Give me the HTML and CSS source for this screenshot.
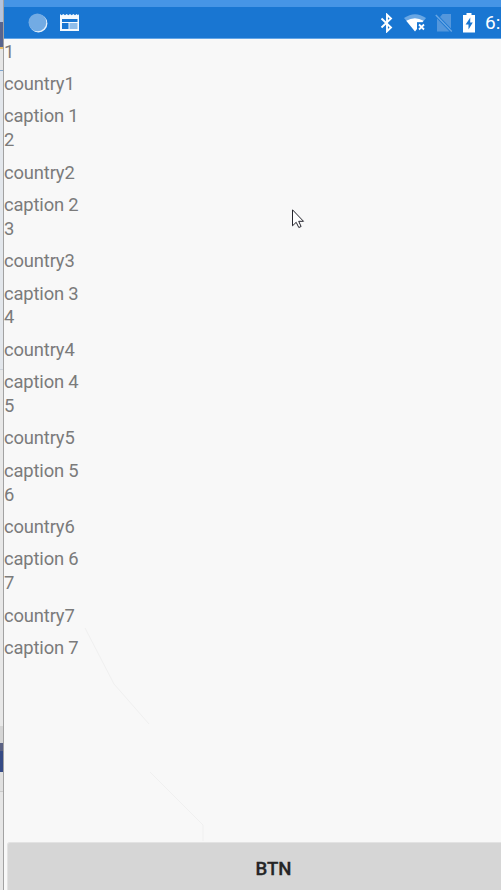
FILE: index.html
```
<!DOCTYPE html>
<html>
<head>
  <meta charset="UTF-8">
  <title>Countries</title>
  <link rel="stylesheet" href="styles.css">
</head>
<body>
  <div class="desktop"></div>
  <div class="phone">
    <div class="titlebar"></div>
    <div class="statusbar">
      <svg class="sync" width="20" height="20" viewBox="0 0 20 20">
        <circle cx="10.4" cy="10.4" r="9" fill="#e4f0fb"/>
        <circle cx="9.4" cy="9.4" r="8.9" fill="#72abe4"/>
      </svg>
      <svg class="news" width="20" height="18" viewBox="0 0 20 18">
        <path fill="#f4f9fe" d="M0 0l1.600 1.300L3.300 0 5 1.300 6.700 0l1.600 1.300L10 0l1.700 1.300L13.300 0 15 1.300 16.700 0l1.300 1.300L19 0v17H0z"/>
        <path fill="#1976d2" d="M2 5h15.500v3H2zM2 9h6.500v6H2z"/>
        <path fill="#8fbdea" d="M9.500 9h8v6h-8z"/>
      </svg>
      <div class="tray">
        <svg width="14" height="20" viewBox="0 0 14 20">
          <path fill="none" stroke="#fff" stroke-width="1.900" d="M1.500 5.500l9.500 9-4 3.800V1.700l4 3.800-9.500 9"/>
        </svg>
        <svg class="wifi" width="22" height="18" viewBox="0 0 22 18">
          <path fill="#69a7e4" d="M0 4Q11-3.600 22 4l-3.500 4.500H4z"/>
          <path fill="#fff" d="M2.200 6.800Q11 1.500 19.500 6.800L18.500 8H13v7l-2 2.500z"/>
          <path stroke="#fff" stroke-width="1.800" d="M15 10.500l5 5M20 10.500l-5 5"/>
        </svg>
        <svg class="sim" width="18" height="20" viewBox="0 0 18 20">
          <path fill="#5497dc" d="M7.500 1H16v14.500L5 4zM2 5.500L14.500 18.500H2z"/>
          <path stroke="#68a6e3" stroke-width="1.500" d="M.8 2l16 16.500"/>
        </svg>
        <svg class="battery" width="12" height="20" viewBox="0 0 12 20">
          <path fill="#fff" d="M3.500 0h5v2H12v17.500H0V2h3.500z"/>
          <path fill="#1976d2" d="M7.300 4.500L2.600 11.500h2.900v5l4.300-7H7.200z"/>
        </svg>
        <span class="clock">6:</span>
      </div>
    </div>
    <div class="list">
      <div class="item"><span>1</span><span>country1</span><span>caption 1</span></div>
      <div class="item"><span>2</span><span>country2</span><span>caption 2</span></div>
      <div class="item"><span>3</span><span>country3</span><span>caption 3</span></div>
      <div class="item"><span>4</span><span>country4</span><span>caption 4</span></div>
      <div class="item"><span>5</span><span>country5</span><span>caption 5</span></div>
      <div class="item"><span>6</span><span>country6</span><span>caption 6</span></div>
      <div class="item"><span>7</span><span>country7</span><span>caption 7</span></div>
    </div>
    <button class="btn">BTN</button>
  </div>
  <svg class="trace" width="130" height="220" viewBox="0 0 130 220">
    <path fill="none" stroke="#f0f0f0" d="M5 5l29 56 35 40M70 149l53 53v16"/>
  </svg>
  <svg class="cursor" width="13" height="20" viewBox="0 0 13 20">
    <path fill="#fff" stroke="#25252d" d="M.5.8v16l3.700-3.500 2.600 5.200 2.300-1-2.400-5.200h4.800z"/>
  </svg>
</body>
</html>
```
FILE: styles.css
```
body {
    margin: 0;
    display: flex;
    width: 501px;
    height: 890px;
    overflow: hidden;
    background: #f8f8f8;
    font-family: Roboto, Arial, sans-serif;
}

/* sliver of the window behind the emulator */
.desktop {
    flex: none;
    box-sizing: border-box;
    width: 4px;
    border-right: 1px solid #a2a2a2;
    background: linear-gradient(#b5c4dd 0 22px, #58658f 22px 47px, #e9bd68 47px 49px, #e6e6e6 49px 70px, #7ba3cd 70px 71px, #e3e7ec 71px 369px, #cdd3da 369px 370px, #e8e8e8 370px 726px, #d5d5d5 726px 743px, #5b6284 743px 751px, #364b86 751px 772px, #e0e0e0 772px 791px, #cacaca 791px 792px, #e6e6e6 792px);
}

.phone {
    flex: none;
    display: flex;
    flex-direction: column;
    width: 497px;
}

.titlebar {
    height: 7px;
    background: #4695e6;
}

.statusbar {
    display: flex;
    align-items: center;
    box-sizing: border-box;
    height: 32px;
    padding-left: 24px;
    border-bottom: 1px solid #63a5e6;
    background: #1976d2;
}

.news {
    margin-left: 12px;
}

.tray {
    display: flex;
    align-items: center;
    margin-left: auto;
}

.wifi {
    margin-left: 10px;
}

.sim {
    margin-left: 9px;
}

.battery {
    margin-left: 10px;
}

.clock {
    width: 16px;
    margin-left: 10px;
    overflow: hidden;
    color: #fff;
    font-size: 19px;
    line-height: 22px;
    white-space: nowrap;
}

.list {
    flex: 1;
    padding-top: 0.6px;
}

.item {
    display: flex;
    flex-direction: column;
    gap: 8.5px;
    color: #7b7b7b;
    font-size: 18.4px;
    letter-spacing: -0.16px;
    line-height: 23.88px;
}

.btn {
    width: 500px;
    height: 48px;
    margin-left: 3px;
    padding: 4px 0 0 33px;
    border: 1px solid #e3e3e3;
    border-bottom: 0;
    border-radius: 3px 3px 0 0;
    background: #d6d6d6;
    color: #252525;
    font: 500 18.6px Roboto, Arial, sans-serif;
    -webkit-text-stroke: 0.3px #252525;
}

.trace {
    position: absolute;
    left: 80px;
    top: 623px;
}

.cursor {
    position: absolute;
    left: 292px;
    top: 209px;
}
```
